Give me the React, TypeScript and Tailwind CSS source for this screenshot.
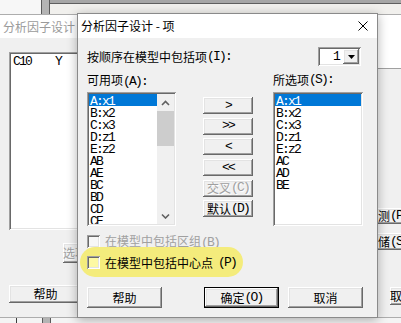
import React from "react";

// classic 3D borders
const raised =
  "shadow-[inset_-1px_-1px_0_#696969,inset_1px_1px_0_#ffffff,inset_-2px_-2px_0_#a0a0a0,inset_2px_2px_0_#e3e3e3]";
const sunken =
  "shadow-[inset_1px_1px_0_#a0a0a0,inset_-1px_-1px_0_#ffffff,inset_2px_2px_0_#696969,inset_-2px_-2px_0_#e3e3e3]";
const mono = "font-['Liberation_Mono',monospace] text-[13px] tracking-[-1.8px] leading-[12px]";

// latin runs get a half-width mono face, CJK stays in Noto
function T({ s }: { s: string }) {
  const parts = s.split(/([\x20-\x7e]+)/).filter(Boolean);
  return (
    <>
      {parts.map((p, i) =>
        /^[\x20-\x7e]+$/.test(p) ? (
          <span key={i} className={mono}>
            {p}
          </span>
        ) : (
          <span key={i}>{p}</span>
        )
      )}
    </>
  );
}

function Btn({
  label,
  className = "",
  disabled = false,
  def = false,
  align = "center",
}: {
  label: string;
  className?: string;
  disabled?: boolean;
  def?: boolean;
  align?: "center" | "start";
}) {
  return (
    <div className={`shrink-0 bg-[#f0f0f0] ${def ? "border border-black" : ""} ${className}`}>
      <div
        className={`w-full h-full flex items-center whitespace-nowrap ${align === "center" ? "justify-center" : "justify-start"} ${raised} ${
          disabled ? "text-[#a0a0a0] [text-shadow:1px_1px_0_#ffffff]" : ""
        }`}
      >
        <T s={label} />
      </div>
    </div>
  );
}

function Chevron({ down = false }: { down?: boolean }) {
  return (
    <svg width="9" height="6" viewBox="0 0 9 6">
      <path
        d={down ? "M1 1.5 L4.5 5 L8 1.5" : "M1 5 L4.5 1.5 L8 5"}
        stroke="#606060"
        strokeWidth="1.6"
        fill="none"
      />
    </svg>
  );
}

function Scrollbar() {
  return (
    <div className="w-[17px] h-full flex flex-col bg-[#f0f0f0]">
      <div className="h-[17px] flex items-center justify-center">
        <Chevron />
      </div>
      <div className="h-[35px] bg-[#cdcdcd]" />
      <div className="flex-1" />
      <div className="h-[17px] flex items-center justify-center">
        <Chevron down />
      </div>
    </div>
  );
}

function ListBox({
  items,
  scroll = false,
  sel = 0,
  className = "",
}: {
  items: string[];
  scroll?: boolean;
  sel?: number;
  className?: string;
}) {
  return (
    <div className={`shrink-0 bg-white p-[2px] ${sunken} ${className}`}>
      <div className="flex h-full overflow-hidden">
        <div className="flex-1 flex flex-col">
          {items.map((it, i) => (
            <div
              key={it}
              className={`h-[12px] shrink-0 pl-[1px] whitespace-pre ${i === sel ? "bg-[#0078d7] text-white" : ""}`}
            >
              <T s={it} />
            </div>
          ))}
        </div>
        {scroll && <Scrollbar />}
      </div>
    </div>
  );
}

const available = ["A:x1", "B:x2", "C:x3", "D:z1", "E:z2", "AB", "AE", "BC", "BD", "CD", "CE", "DE"];
const selected = ["A:x1", "B:x2", "C:x3", "D:z1", "E:z2", "AC", "AD", "BE"];
const moves = [">", ">>", "<", "<<"];

export default function App() {
  return (
    <div className="relative w-[401px] h-[323px] overflow-hidden bg-[#f0f0f0] font-['Noto_Sans_CJK_SC',sans-serif] text-[12px] leading-[12px] text-black select-none">
      {/* window behind, top edge */}
      <div className="absolute left-0 top-0 w-[401px] h-[14px] flex">
        <div className="w-[41px] bg-[#f7f7f7]" />
        <div className="w-[9px] bg-[#b4b4b4] border-x border-[#5a5a5a]" />
        <div className="flex-1 flex flex-col">
          <div className="h-[3px] bg-[#a6a6a6]" />
          <div className="h-[1px] bg-[#5f5f5f]" />
          <div className="flex-1 bg-[#f1f0ed]" />
        </div>
      </div>

      {/* window behind, bottom edge */}
      <div className="absolute left-0 bottom-0 w-[401px] h-[6px] flex bg-[#f4f4f4]">
        <div className="ml-[16px] w-[1px] bg-[#3c3c3c]" />
        <div className="ml-[25px] w-[9px] bg-[#b4b4b4] border-x border-[#5a5a5a]" />
      </div>

      {/* background dialog */}
      <div className="absolute left-[-1px] top-[14px] w-[410px] h-[304px] border border-[#adadad] bg-[#f0f0f0] flex flex-col">
        <div className="h-[23px] bg-white flex items-center pl-[3px] text-[#9a9a9a]">分析因子设计</div>
        <div className="flex-1 flex pl-[9px]">
          <div className="flex flex-col">
            <ListBox items={["C10    Y"]} sel={-1} className="w-[200px] h-[178px] mt-[14px] pl-[3px]" />
            <Btn label="选项(O)..." disabled align="start" className="w-[150px] h-[20px] mt-[13px] ml-[29px] pl-[25px]" />
            <Btn label="帮助" className="w-[73px] h-[18px] mt-[22px]" />
          </div>
          <div className="ml-auto w-[110px] flex flex-col">
            <div className="h-[31px] bg-white border-b border-[#a0a0a0]" />
            <Btn label="预测(P)..." align="start" className="h-[16px] mt-[139px] pl-[68px]" />
            <Btn label="存储(S)..." align="start" className="h-[17px] mt-[9px] pl-[68px]" />
            <Btn label="取消" align="start" className="h-[18px] mt-[37px] pl-[92px]" />
          </div>
        </div>
      </div>

      {/* foreground dialog */}
      <div className="absolute left-[77px] top-[13px] w-[301px] h-[305px] border border-[#8a8a8a] bg-[#f0f0f0] shadow-[0_2px_10px_rgba(0,0,0,0.3)] flex flex-col">
        <div className="h-[24px] shrink-0 bg-white flex items-center pl-[3px] pr-[9px]">
          <span>分析因子设计 - 项</span>
          <svg className="ml-auto" width="10" height="10" viewBox="0 0 10 10">
            <path d="M0.5 0.5 L9.5 9.5 M9.5 0.5 L0.5 9.5" stroke="#000" strokeWidth="1" />
          </svg>
        </div>

        <div className="flex-1 flex flex-col pl-[9px] pr-[14px]">
          <div className="flex items-center h-[19px] mt-[9px]">
            <T s="按顺序在模型中包括项(I):" />
            <div className={`ml-auto mr-[2px] w-[43px] h-[19px] bg-white p-[2px] flex ${sunken}`}>
              <div className="flex-1 flex items-center justify-end pr-[4px]">
                <span className={mono}>1</span>
              </div>
              <div className={`w-[16px] h-[15px] bg-[#f0f0f0] flex items-center justify-center ${raised}`}>
                <svg width="7" height="4" viewBox="0 0 7 4">
                  <polygon points="0,0 7,0 3.5,4" fill="#000" />
                </svg>
              </div>
            </div>
          </div>

          <div className="flex mt-[8px] h-[12px]">
            <div className="w-[186px]">
              <T s="可用项(A):" />
            </div>
            <T s="所选项(S):" />
          </div>

          <div className="flex mt-[6px] h-[134px]">
            <ListBox items={available} scroll className="w-[89px] h-full" />
            <div className="ml-[27px] w-[50px] pt-[5px] flex flex-col gap-[3.7px]">
              {moves.map((m) => (
                <Btn key={m} label={m} className="w-[50px] h-[17px]" />
              ))}
              <Btn label="交叉(C)" disabled className="w-[50px] h-[17px]" />
              <Btn label="默认(D)" className="w-[50px] h-[17px]" />
            </div>
            <ListBox items={selected} className="ml-[20px] w-[90px] h-full" />
          </div>

          <div className="flex items-center h-[13px] mt-[9px] gap-[5px]">
            <div className={`w-[13px] h-[13px] bg-[#f7f7f7] ${sunken}`} />
            <span className="text-[#a0a0a0]">
              <T s="在模型中包括区组(B)" />
            </span>
          </div>

          <div className="relative flex items-center h-[13px] mt-[8px]">
            <div className="absolute left-[-7px] top-[-9px] w-[163px] h-[30px] rounded-full bg-[#f4ec7c]" />
            <div className="relative flex items-center gap-[5px]">
              <div className={`w-[13px] h-[13px] bg-[#fdf9a3] ${sunken}`} />
              <T s="在模型中包括中心点(P)" />
            </div>
          </div>

          <div className="flex mt-[18px]">
            <Btn label="帮助" className="w-[75px] h-[21px]" />
            <Btn label="确定(O)" def className="ml-[42px] w-[75px] h-[21px]" />
            <Btn label="取消" className="ml-[9px] w-[75px] h-[21px]" />
          </div>
        </div>
      </div>
    </div>
  );
}
